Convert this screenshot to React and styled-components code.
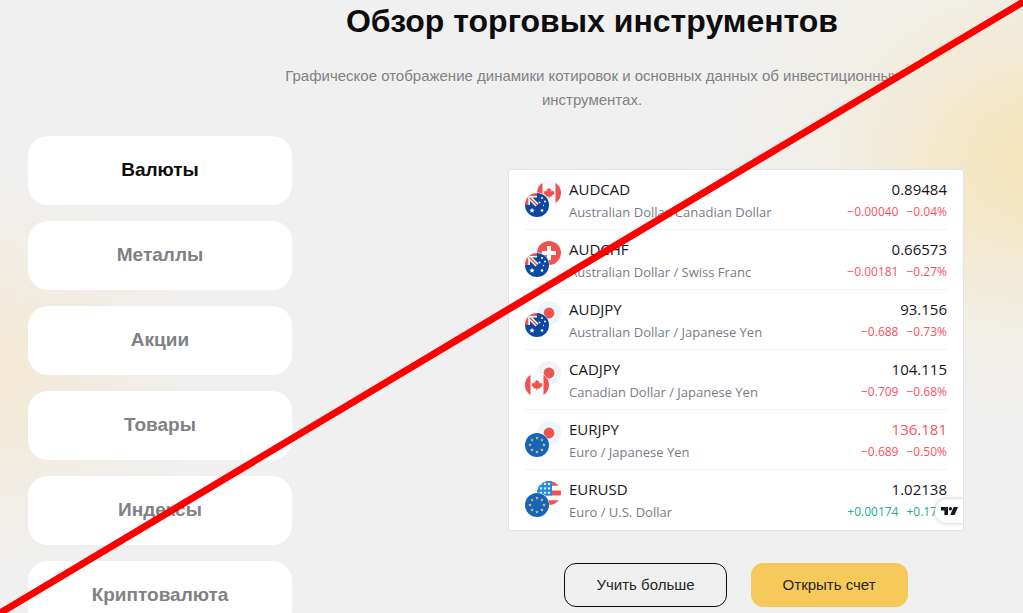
import React from "react";
import styled, { createGlobalStyle } from "styled-components";

const GlobalStyle = createGlobalStyle`
  *, *::before, *::after { box-sizing: border-box; }
  body {
    margin: 0;
    background: #f0f0f0;
    font-family: "Liberation Sans", Arial, sans-serif;
    color: #0d0d0d;
  }
`;

const Page = styled.div`
  min-height: 100vh;
  padding: 2px 28px 0;
  overflow: hidden;
  background:
    radial-gradient(320px 270px at calc(100% + 16px) 160px, rgba(245, 222, 155, 0.68) 0, rgba(245, 225, 170, 0.5) 32%, rgba(243, 233, 203, 0.28) 64%, rgba(240, 240, 240, 0) 100%),
    radial-gradient(220px 200px at -10px 370px, rgba(245, 229, 195, 0.7) 0, rgba(244, 232, 208, 0.46) 45%, rgba(240, 240, 240, 0) 100%),
    #f0f0f0;
`;

const Header = styled.header`
  margin-left: 161px;
  text-align: center;
`;

const Title = styled.h2`
  margin: 0;
  font-size: 32px;
  line-height: 38px;
  font-weight: 700;
`;

const Lead = styled.p`
  max-width: 640px;
  margin: 24px auto 0;
  font-size: 15px;
  line-height: 24px;
  color: #808184;
`;

const Content = styled.main`
  display: grid;
  grid-template-columns: 264px minmax(0, 1fr);
  column-gap: 185px;
  margin-top: 24px;
`;

const Tabs = styled.div`
  display: flex;
  flex-direction: column;
  gap: 16px;
`;

const Tab = styled.button`
  height: 69px;
  padding: 0 16px 2px;
  border: 0;
  border-radius: 20px;
  background: #fff;
  font: 700 19px/24px "Liberation Sans", Arial, sans-serif;
  color: ${(p) => (p.$active ? "#0d0d0d" : "#808184")};
  cursor: pointer;
`;

const Panel = styled.section`
  display: flex;
  flex-direction: column;
  align-items: center;
  gap: 32px;
  padding-top: 33px;
`;

const Card = styled.div`
  position: relative;
  width: 100%;
  max-width: 456px;
  padding: 0 16px;
  overflow: hidden;
  border: 1px solid #e0e3eb;
  border-radius: 3px;
  background: #fff;
  font-family: "Open Sans", "Noto Sans", sans-serif;
`;

const Quotes = styled.ul`
  margin: 0;
  padding: 0;
  list-style: none;
`;

const Quote = styled.li`
  display: flex;
  align-items: flex-start;
  height: 60px;
  padding-top: 9px;
  border-bottom: 1px solid #f0f3fa;

  &:last-child { border-bottom-color: transparent; }
`;

const PairIcon = styled.svg`
  flex: none;
  width: 36px;
  height: 36px;
  margin: 2px 8px 0 0;
`;

const Names = styled.div`
  flex: 1;
  min-width: 0;
`;

const Figures = styled.div`
  text-align: right;
`;

const Main = styled.div`
  font-size: 15px;
  line-height: 20px;
  color: ${(p) => (p.$down ? "#f7525f" : "#131722")};
`;

const Sub = styled.div`
  margin-top: 3px;
  font-size: 13px;
  line-height: 20px;
  white-space: nowrap;
  color: #787b86;
`;

const Change = styled(Sub)`
  display: flex;
  justify-content: flex-end;
  gap: 8px;
  font-size: 12px;
  color: ${(p) => (p.$up ? "#22ab94" : "#f7525f")};
`;

const Badge = styled.a`
  position: absolute;
  right: 0;
  bottom: 7px;
  display: flex;
  align-items: center;
  width: 28px;
  height: 24px;
  padding-left: 6px;
  border-radius: 12px 0 0 12px;
  background: #fff;
  box-shadow: 0 0 4px rgba(0, 0, 0, 0.25);
`;

const Actions = styled.div`
  display: flex;
  gap: 24px;
`;

const Action = styled.button`
  height: 44px;
  padding: 0 31px;
  border: 1px solid ${(p) => (p.$filled ? "#f6ca5a" : "#0d0d0d")};
  border-radius: 12px;
  background: ${(p) => (p.$filled ? "#f6ca5a" : "transparent")};
  font: 400 15px/24px "Liberation Sans", Arial, sans-serif;
  color: #262626;
  white-space: nowrap;
  cursor: pointer;
`;

const Strike = styled.svg`
  position: fixed;
  inset: 0;
  width: 100%;
  height: 100%;
  pointer-events: none;
`;

const maple =
  "M12 6.6l1.1 2 1.3-.6-.3 2.6 1.4-1 .4.9 1.6-.2-.5 1.5.8.5-2.6 2.1.2 1H12.5v1.9h-1v-1.9H8.6l.2-1-2.6-2.1.8-.5-.5-1.5 1.6.2.4-.9 1.4 1-.3-2.6 1.3.6z";

const star = (x, y, r) => {
  const pts = [];
  for (let i = 0; i < 10; i += 1) {
    const a = (Math.PI / 5) * i - Math.PI / 2;
    const d = i % 2 ? r * 0.45 : r;
    pts.push(`${(x + d * Math.cos(a)).toFixed(2)},${(y + d * Math.sin(a)).toFixed(2)}`);
  }
  return pts.join(" ");
};

const flags = {
  AUD: (
    <>
      <rect width="24" height="24" fill="#0c47a1" />
      <path d="M0 0h12v4.600H5V12H0z" fill="#fff" />
      <path d="M0 0h12v3H3.400v9H0z" fill="#ef5350" />
      <path d="M4 4l8 8" stroke="#fff" strokeWidth="4" />
      <path d="M4.500 4.500l8 8" stroke="#ef5350" strokeWidth="1.400" />
      <path d="M12 12h2v2h-2z" fill="#0c47a1" />
      <polygon points={star(7, 17.500, 2.800)} fill="#fff" />
      <circle cx="17" cy="5" r="1" fill="#fff" />
      <circle cx="14.500" cy="9.500" r="1" fill="#fff" />
      <circle cx="20" cy="8.500" r="1" fill="#fff" />
      <circle cx="18.500" cy="12.500" r=".7" fill="#fff" />
      <circle cx="17" cy="17.500" r="1.300" fill="#fff" />
    </>
  ),
  CAD: (
    <>
      <rect width="24" height="24" fill="#f9faff" />
      <path d="M0 0h5.500v24H0zM18.500 0H24v24h-5.500z" fill="#ef5350" />
      <path d={maple} fill="#ef5350" />
    </>
  ),
  CHF: (
    <>
      <rect width="24" height="24" fill="#ef5350" />
      <path d="M10 5h4v5h5v4h-5v5h-4v-5H5v-4h5z" fill="#fff" />
    </>
  ),
  JPY: (
    <>
      <rect width="24" height="24" fill="#f0f3fa" />
      <circle cx="12" cy="12" r="5.400" fill="#ef5350" />
    </>
  ),
  EUR: (
    <>
      <rect width="24" height="24" fill="#1565c0" />
      {[0, 1, 2, 3, 4, 5, 6, 7].map((i) => (
        <polygon
          key={i}
          points={star(12 + 7 * Math.sin((i * Math.PI) / 4), 12 - 7 * Math.cos((i * Math.PI) / 4), 1.8)}
          fill="#ffca28"
        />
      ))}
    </>
  ),
  USD: (
    <>
      <rect width="24" height="24" fill="#fff" />
      <path d="M0 0h24v4.800H0zM0 9.600h24v4.800H0zM0 19.200h24V24H0z" fill="#ef5350" />
      <rect width="15" height="14.400" fill="#1e88e5" />
      {[4, 8, 12].map((x) =>
        [3, 7.400, 11.800].map((y) => <polygon key={`${x}-${y}`} points={star(x, y, 1.8)} fill="#fff" />)
      )}
    </>
  ),
};

function Pair({ id, base, quote }) {
  return (
    <PairIcon viewBox="0 0 36 36" aria-hidden="true">
      <defs>
        <clipPath id={`${id}-disc`}>
          <circle cx="12" cy="12" r="12" />
        </clipPath>
      </defs>
      <g transform="translate(12 0)">
        <g clipPath={`url(#${id}-disc)`}>{flags[quote]}</g>
      </g>
      <circle cx="12" cy="24" r="12.400" fill="#fff" />
      <g transform="translate(0 12)">
        <g clipPath={`url(#${id}-disc)`}>{flags[base]}</g>
      </g>
    </PairIcon>
  );
}

const tabs = ["Валюты", "Металлы", "Акции", "Товары", "Индексы", "Криптовалюта"];

const quotes = [
  { base: "AUD", quote: "CAD", name: "Australian Dollar/Canadian Dollar", price: "0.89484", diff: "−0.00040", pct: "−0.04%" },
  { base: "AUD", quote: "CHF", name: "Australian Dollar / Swiss Franc", price: "0.66573", diff: "−0.00181", pct: "−0.27%" },
  { base: "AUD", quote: "JPY", name: "Australian Dollar / Japanese Yen", price: "93.156", diff: "−0.688", pct: "−0.73%" },
  { base: "CAD", quote: "JPY", name: "Canadian Dollar / Japanese Yen", price: "104.115", diff: "−0.709", pct: "−0.68%" },
  { base: "EUR", quote: "JPY", name: "Euro / Japanese Yen", price: "136.181", diff: "−0.689", pct: "−0.50%", down: true },
  { base: "EUR", quote: "USD", name: "Euro / U.S. Dollar", price: "1.02138", diff: "+0.00174", pct: "+0.17%", up: true },
];

export default function App() {
  const [active, setActive] = React.useState(0);
  return (
    <Page>
      <GlobalStyle />
      <Header>
        <Title>Обзор торговых инструментов</Title>
        <Lead>
          Графическое отображение динамики котировок и основных данных об инвестиционных инструментах.
        </Lead>
      </Header>
      <Content>
        <Tabs role="tablist">
          {tabs.map((label, i) => (
            <Tab key={label} type="button" role="tab" aria-selected={i === active} $active={i === active} onClick={() => setActive(i)}>
              {label}
            </Tab>
          ))}
        </Tabs>
        <Panel>
          <Card>
            <Quotes>
              {quotes.map((q) => (
                <Quote key={q.base + q.quote}>
                  <Pair id={q.base + q.quote} base={q.base} quote={q.quote} />
                  <Names>
                    <Main>{q.base + q.quote}</Main>
                    <Sub>{q.name}</Sub>
                  </Names>
                  <Figures>
                    <Main $down={q.down}>{q.price}</Main>
                    <Change $up={q.up}>
                      <span>{q.diff}</span>
                      <span>{q.pct}</span>
                    </Change>
                  </Figures>
                </Quote>
              ))}
            </Quotes>
            <Badge href="#tradingview" aria-label="TradingView">
              <svg width="17" height="10" viewBox="0 0 17 10" aria-hidden="true">
                <path d="M0 1h7v8H3.400V4.600H0z" fill="#131722" />
                <circle cx="9.400" cy="2.700" r="1.700" fill="#131722" />
                <path d="M12.700 1H17l-3.500 8H9.200z" fill="#131722" />
              </svg>
            </Badge>
          </Card>
          <Actions>
            <Action type="button">Учить больше</Action>
            <Action type="button" $filled>Открыть счет</Action>
          </Actions>
        </Panel>
      </Content>
      <Strike aria-hidden="true">
        <line x1="0" y1="100%" x2="100%" y2="2" stroke="#f00" strokeWidth="7" strokeLinecap="square" />
      </Strike>
    </Page>
  );
}
